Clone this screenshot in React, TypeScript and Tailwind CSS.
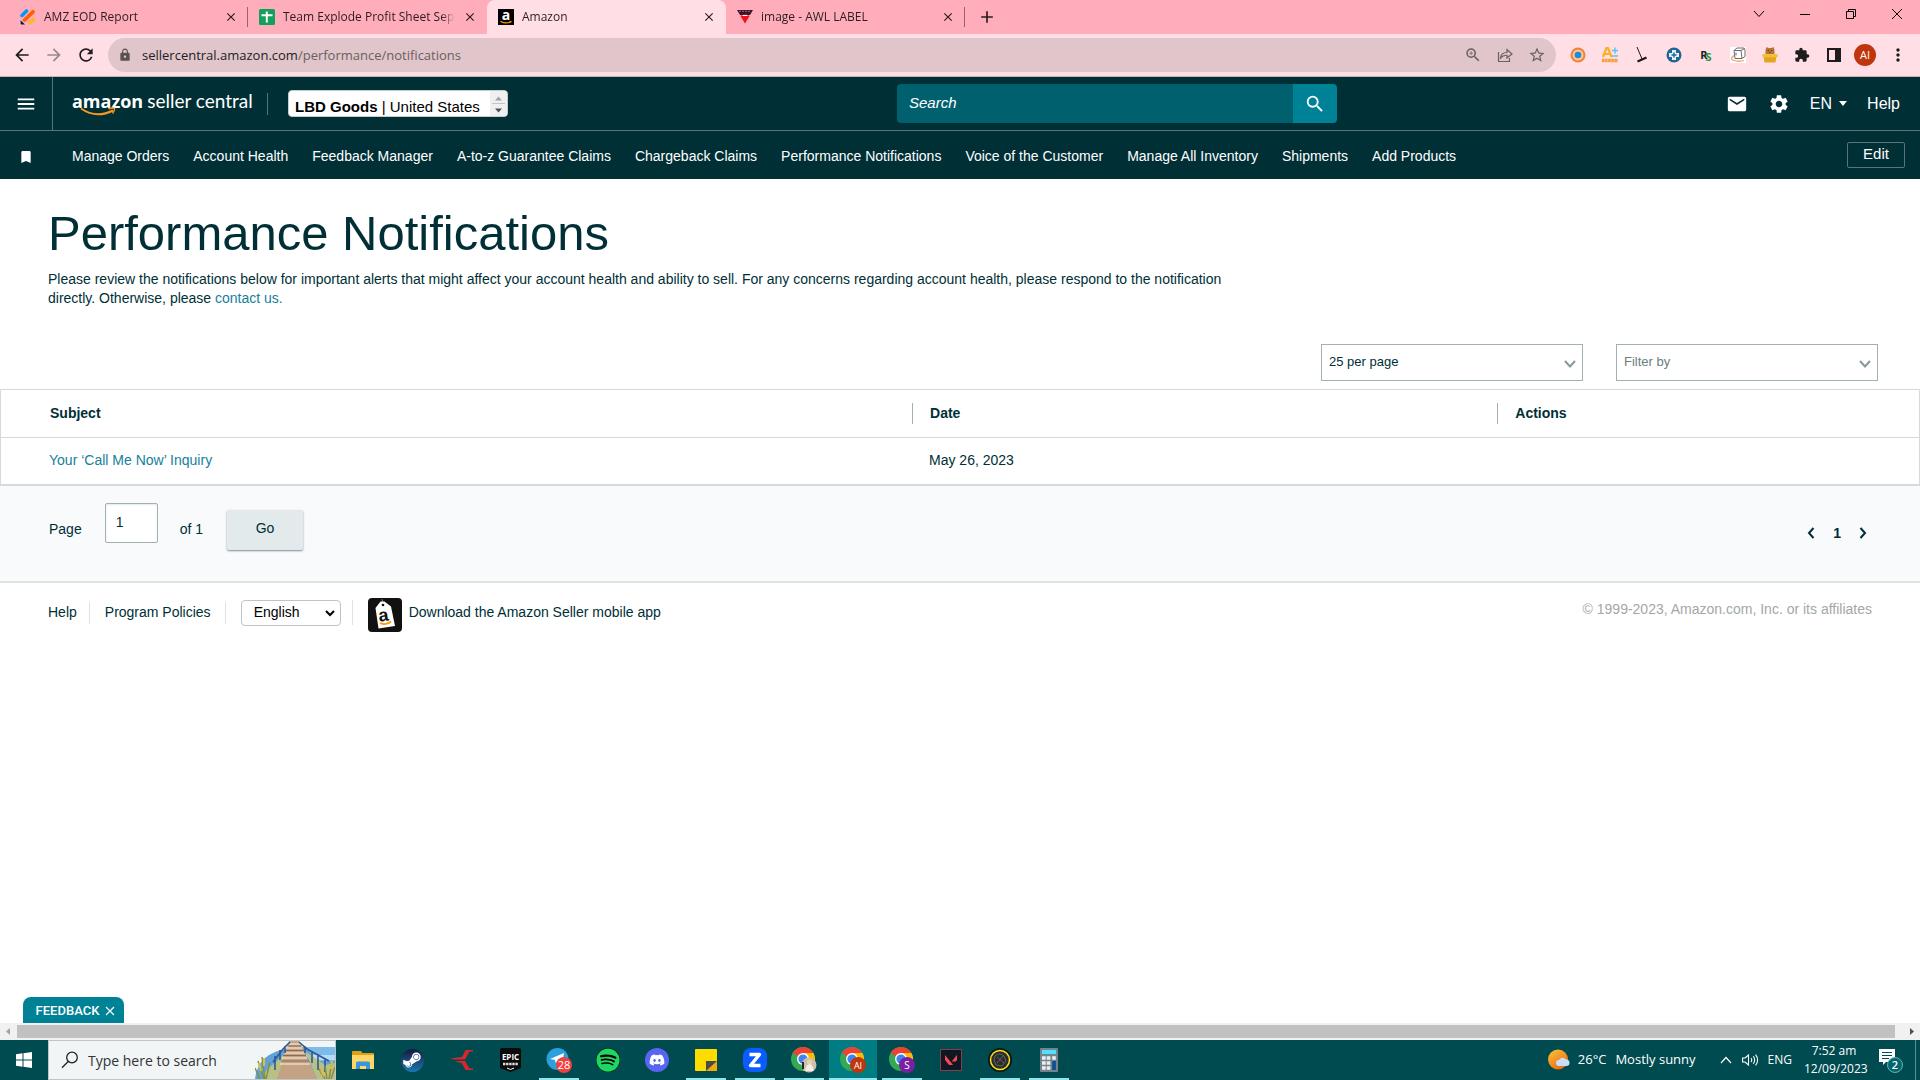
import React from "react";
import { FaDiscord, FaSpotify, FaSteamSymbol } from "react-icons/fa";
import { SiValorant } from "react-icons/si";
import {
  MdArrowBack,
  MdArrowForward,
  MdBookmark,
  MdClose,
  MdEmail,
  MdExtension,
  MdLock,
  MdMoreVert,
  MdRefresh,
  MdSearch,
  MdSettings,
  MdStarBorder,
  MdZoomIn,
  MdAdd,
  MdMenu,
} from "react-icons/md";

/* ---------- browser chrome ---------- */

const FormIcon = () => (
  <svg viewBox="0 0 16 16" className="size-4">
    <path d="M2 6.500 6.500 2" stroke="#0099ff" strokeWidth="3.600" strokeLinecap="round" />
    <path d="M4.500 11 13 2.800" stroke="#ff6100" strokeWidth="3.800" strokeLinecap="round" />
    <path d="M10 13.800 13.600 10.200" stroke="#ffb629" strokeWidth="3.600" strokeLinecap="round" />
    <path d="M.6 11.200v3.400q0 1 1 1H5Z" fill="#0a1551" />
  </svg>
);

const SheetIcon = () => (
  <svg viewBox="0 0 16 16" className="size-4">
    <rect width="16" height="16" rx="1.500" fill="#12a05c" />
    <path d="M7.800 2.500v11M2.500 6.200h11" stroke="#fff" strokeWidth="2" />
  </svg>
);

const AmazonIcon = () => (
  <span className="relative grid size-4 place-items-center bg-black">
    <span className="pb-1 text-[14px] leading-3 font-bold text-white">a</span>
    <svg viewBox="0 0 16 16" className="absolute inset-0 size-4">
      <path d="M2.500 12.200q5.500 3.400 11 .2" fill="none" stroke="#f90" strokeWidth="1.300" />
    </svg>
  </span>
);

const AwlIcon = () => (
  <svg viewBox="0 0 16 16" className="size-4">
    <path d="M0 1h16l-3 5H3Z" fill="#3b1430" />
    <path d="M2 2.300h12" stroke="#c9527c" strokeWidth="1" strokeDasharray="2 1" />
    <path d="m3.400 7 4.600 7.500L12.600 7 10 5.500H6Z" fill="#f01218" />
    <path d="M5.500 6.500h5" stroke="#fff" strokeWidth="1" />
  </svg>
);

const tabs = [
  { title: "AMZ EOD Report", icon: <FormIcon />, active: false, line: true },
  { title: "Team Explode Profit Sheet Septe", icon: <SheetIcon />, active: false, line: false },
  { title: "Amazon", icon: <AmazonIcon />, active: true, line: false },
  { title: "image - AWL LABEL", icon: <AwlIcon />, active: false, line: true },
];

function TabStrip() {
  return (
    <div className="flex h-[34px] bg-[#ffadbb] pl-[9px] text-[#2b1d20]">
      {tabs.map((t) => (
        <div
          key={t.title}
          className={
            t.active
              ? "flex w-[239px] items-center rounded-t-lg bg-[#ffdfe5] pl-[11px]"
              : "flex w-[239px] items-center pl-[11px]"
          }
        >
          {t.icon}
          <span className="ml-2 w-[172px] overflow-hidden text-[12px] whitespace-nowrap [mask-image:linear-gradient(to_right,#000_92%,transparent)]">
            {t.title}
          </span>
          <button aria-label={"Close " + t.title} className="ml-2">
            <MdClose className="size-[14px]" />
          </button>
          {t.line && <span className="ml-auto h-5 w-px bg-[#94646d]" />}
        </div>
      ))}
      <button aria-label="New tab" className="ml-3">
        <MdAdd className="size-5" />
      </button>
      <div className="ml-auto flex h-7 items-center text-black">
        <button aria-label="Search tabs" className="grid w-[46px] place-items-center">
          <svg viewBox="0 0 12 12" className="size-3" fill="none" stroke="currentColor">
            <path d="m1 3 5 5.500 5-5.500" />
          </svg>
        </button>
        <button aria-label="Minimize" className="grid w-[46px] place-items-center">
          <svg viewBox="0 0 12 12" className="size-3" fill="none" stroke="currentColor">
            <path d="M1 6.500h10" />
          </svg>
        </button>
        <button aria-label="Restore" className="grid w-[46px] place-items-center">
          <svg viewBox="0 0 12 12" className="size-3" fill="none" stroke="currentColor">
            <path d="M1.500 3.500h7v7h-7zM3.500 3.500v-2h7v7h-2" />
          </svg>
        </button>
        <button aria-label="Close window" className="grid w-[46px] place-items-center">
          <svg viewBox="0 0 12 12" className="size-3" fill="none" stroke="currentColor">
            <path d="m1 1 10 10M11 1 1 11" />
          </svg>
        </button>
      </div>
    </div>
  );
}

const extensions: { name: string; icon: React.ReactNode }[] = [
  {
    name: "Keepa",
    icon: (
      <svg viewBox="0 0 16 16" className="size-4">
        <circle cx="8" cy="8" r="7.500" fill="#f0813a" />
        <circle cx="8" cy="8" r="5.500" fill="#ffc58a" />
        <circle cx="8" cy="8" r="3.300" fill="#1490e0" />
      </svg>
    ),
  },
  {
    name: "A+ Scout",
    icon: (
      <svg viewBox="0 0 16 16" className="size-4">
        <path d="M1 10 4.500.8h1.400L9.500 10M2.500 7h5" fill="none" stroke="#fbb01c" strokeWidth="2.200" />
        <path d="M10 3.500h6M13 .5v6M10 9h6" stroke="#5cc4ee" strokeWidth="1.400" />
        <path d="M0 13.500h16" stroke="#f79a32" strokeWidth="3.500" strokeDasharray="2.500 .6" />
      </svg>
    ),
  },
  {
    name: "Broom",
    icon: (
      <svg viewBox="0 0 16 16" className="size-4" fill="none" stroke="#1c1618">
        <path d="M3 0 8 12" strokeWidth="1" />
        <path d="m3.500 14.500 9-4" strokeWidth="2.200" />
      </svg>
    ),
  },
  {
    name: "Helper",
    icon: (
      <svg viewBox="0 0 16 16" className="size-4">
        <circle cx="8" cy="8" r="7.500" fill="#1f6596" />
        <path d="M8 3v10M3 8h10" stroke="#e4f1f7" strokeWidth="4" />
        <path d="M8 5.500v5M5.500 8h5" stroke="#1f6596" strokeWidth="1.400" />
      </svg>
    ),
  },
  {
    name: "RevSeller",
    icon: (
      <span className="flex text-[11px] leading-4 font-bold text-[#14201a]">
        R<span className="-ml-0.5 pt-0.5 text-[#169c4c]">S</span>
      </span>
    ),
  },
  {
    name: "Box",
    icon: (
      <svg viewBox="0 0 16 16" className="size-4">
        <rect width="16" height="16" fill="#fff" />
        <path d="M4 3.500 7 1h7l1 2v6.500l-3 2H5Zm0 0h7l3.500-2M11 3.500 12 11M6 5.500v3" fill="none" stroke="#6d6d70" />
        <path d="M4 8.500Q-1 12 4 13.500q5 1.500 10 0" fill="none" stroke="#f0a063" strokeWidth="1.300" />
      </svg>
    ),
  },
  {
    name: "Hamster",
    icon: (
      <svg viewBox="0 0 16 16" className="size-4">
        <path d="M3.500 8V3L4.500 0l2 1h3l2-1 1 3v5Z" fill="#b87436" />
        <path d="M5.800 3.500h.9M9.300 3.500h.9M7.500 5.500h1" stroke="#35200f" strokeWidth="1.200" />
        <path d="M1.500 9h13L13.500 15.500h-11Z" fill="#e3a41e" />
        <rect y="7" width="16" height="3.200" rx="1.600" fill="#f3bf3a" />
      </svg>
    ),
  },
];

function Toolbar() {
  return (
    <div className="flex h-[43px] items-center border-b border-[#c9b0b4] bg-[#ffdfe5] text-[#201c1d]">
      <button aria-label="Back" className="ml-3">
        <MdArrowBack className="size-5" />
      </button>
      <button aria-label="Forward" className="ml-3 text-[#9b888b]">
        <MdArrowForward className="size-5" />
      </button>
      <button aria-label="Reload" className="ml-3">
        <MdRefresh className="size-5" />
      </button>
      <div className="ml-3 flex h-[34px] flex-1 items-center rounded-full bg-[#e0c5ca] px-[10px] text-[#6a5f61]">
        <MdLock className="size-[14px] text-[#5b5052]" />
        <div className="ml-[10px] flex-1 text-[13px] leading-5">
          <span className="text-[#221c1e]">sellercentral.amazon.com</span>/performance/notifications
        </div>
        <button aria-label="Zoom" className="mr-[15px]">
          <MdZoomIn className="size-[18px]" />
        </button>
        <button aria-label="Share" className="mr-[15px]">
          <svg viewBox="0 0 16 16" className="size-4" fill="none" stroke="currentColor" strokeWidth="1.200">
            <path d="M1.500 5v9.500h11V11M3.500 11Q4 5.500 10 5.500V2.500L15 7l-5 4V8.300Q6 8 3.500 11Z" />
          </svg>
        </button>
        <button aria-label="Bookmark">
          <MdStarBorder className="size-[18px]" />
        </button>
      </div>
      <div className="ml-[14px] flex items-center gap-4">
        {extensions.map((e) => (
          <button key={e.name} aria-label={e.name} className="grid size-4 place-items-center">
            {e.icon}
          </button>
        ))}
        <button aria-label="Extensions">
          <MdExtension className="size-4" />
        </button>
        <button aria-label="Side panel">
          <svg viewBox="0 0 16 16" className="size-4">
            <path d="M1 1h14v14H1Zm2 2v10h6V3Z" fill="currentColor" fillRule="evenodd" />
          </svg>
        </button>
      </div>
      <button
        aria-label="Profile"
        className="ml-3 grid size-[22px] place-items-center rounded-full bg-[#bf360c] text-[11px] text-white"
      >
        AI
      </button>
      <button aria-label="Menu" className="mr-3 ml-3">
        <MdMoreVert className="size-5" />
      </button>
    </div>
  );
}

/* ---------- seller central ---------- */

const navItems = [
  "Manage Orders",
  "Account Health",
  "Feedback Manager",
  "A-to-z Guarantee Claims",
  "Chargeback Claims",
  "Performance Notifications",
  "Voice of the Customer",
  "Manage All Inventory",
  "Shipments",
  "Add Products",
];

function SiteHeader() {
  return (
    <header className="bg-[#002f36] text-white">
      <div className="flex h-[54px] items-center border-b border-[#59747a]">
        <button aria-label="Menu" className="grid h-full w-[53px] place-items-center border-r border-[#59747a]">
          <MdMenu className="size-[22px]" />
        </button>
        <a
          href="#home"
          className="relative ml-[19px] flex w-[176px] items-baseline gap-1 pb-[6px] font-['Open_Sans',sans-serif] text-[18px] leading-6 whitespace-nowrap"
        >
          <span className="font-bold">amazon</span>
          <span className="font-['Lato',sans-serif] text-[19px]">seller central</span>
          <svg viewBox="0 0 36 10" className="absolute top-[18px] left-2 h-[10px] w-9" fill="none" stroke="#f7981d">
            <path d="M1 1.500Q16 12 33 3.500" strokeWidth="2" />
            <path d="M28.500 1.800Q33 .6 34.500 1.300 35 3.500 32.500 6.500" strokeWidth="1.400" />
          </svg>
        </a>
        <span className="ml-[19px] h-[22px] w-px bg-[#59747a]" />
        <button className="ml-5 flex h-[27px] w-[220px] items-stretch overflow-hidden rounded border border-[#c4cccd] bg-white text-left text-[15px] text-black">
          <span className="flex-1 pt-1 pl-[6px] leading-6 whitespace-nowrap">
            <b>LBD Goods</b> | United States
          </span>
          <span className="flex w-[17px] flex-col bg-[#f0f0f0]">
            <svg viewBox="0 0 17 25" className="h-full w-full">
              <path d="M5 9.500 8.500 5.500 12 9.500Z" fill="#a3a3a3" />
              <path d="M2 12.500h13" stroke="#c4c4c4" />
              <path d="M5 17.500 8.500 21.500 12 17.500Z" fill="#505050" />
            </svg>
          </span>
        </button>
        <form className="ml-[389px] flex h-[39px] w-[440px]" onSubmit={(e) => e.preventDefault()}>
          <input
            aria-label="Search"
            placeholder="Search"
            className="min-w-0 flex-1 rounded-l-sm bg-[#00606e] px-3 text-[15px] italic placeholder:text-white"
          />
          <button aria-label="Search" className="grid w-11 place-items-center rounded-r-sm bg-[#008296]">
            <MdSearch className="size-[22px]" />
          </button>
        </form>
        <div className="ml-auto flex items-center pr-5 text-[16px]">
          <button aria-label="Messages">
            <MdEmail className="size-[22px]" />
          </button>
          <button aria-label="Settings" className="ml-5">
            <MdSettings className="size-[22px]" />
          </button>
          <button className="ml-5 flex items-center gap-[7px]">
            EN
            <svg viewBox="0 0 8 5" className="h-[5px] w-2">
              <path d="M0 0h8L4 5Z" fill="currentColor" />
            </svg>
          </button>
          <a href="#help" className="ml-5">
            Help
          </a>
        </div>
      </div>
      <nav className="flex h-12 items-center pt-[3px] text-[14px]">
        <MdBookmark className="ml-[18px] size-4" />
        <div className="ml-[38px] flex gap-6 whitespace-nowrap">
          {navItems.map((n) => (
            <a key={n} href="#nav">
              {n}
            </a>
          ))}
        </div>
        <button className="mr-[15px] mb-1 ml-auto h-[26px] w-[58px] rounded-xs border border-[#59747a] pb-0.5 text-[15px] leading-5">
          Edit
        </button>
      </nav>
    </header>
  );
}

function Dropdown({ label, option, muted }: { label: string; option: string; muted?: boolean }) {
  return (
    <div className="relative">
      <select
        aria-label={label}
        className={
          muted
            ? "block h-[37px] w-[262px] appearance-none border border-[#a1b1b3] bg-white pb-0.5 pl-[7px] text-[13px] text-[#6c7c7f]"
            : "block h-[37px] w-[262px] appearance-none border border-[#a1b1b3] bg-white pb-0.5 pl-[7px] text-[13px] text-[#002f36]"
        }
      >
        <option>{option}</option>
      </select>
      <svg
        viewBox="0 0 12 8"
        className="pointer-events-none absolute top-4 right-[7px] h-2 w-3"
        fill="none"
        stroke="#87999c"
        strokeWidth="2"
      >
        <path d="m1 1 5 5.500L11 1" />
      </svg>
    </div>
  );
}

function Notifications() {
  return (
    <>
      <section className="px-12 pt-[25px]">
        <h1 className="text-[49px] leading-[58px] whitespace-nowrap">Performance Notifications</h1>
        <p className="max-w-[1240px] pt-2 text-[14px] leading-[19px]">
          Please review the notifications below for important alerts that might affect your account health and ability
          to sell. For any concerns regarding account health, please respond to the notification
          <br />
          directly. Otherwise, please{" "}
          <a href="#contact" className="text-[#17809a]">
            contact us.
          </a>
        </p>
      </section>
      <div className="mt-9 flex justify-end gap-[33px] pr-[42px] pb-2">
        <Dropdown label="Results per page" option="25 per page" />
        <Dropdown label="Filter" option="Filter by" muted />
      </div>
      <table className="w-full table-fixed border border-b-2 border-[#d5dbdb] text-left text-[14px]">
        <thead>
          <tr className="h-12 border-b border-[#d5dbdb]">
            <th className="w-[47.5%] pl-[49px]">Subject</th>
            <th className="w-[30.5%]">
              <div className="border-l border-[#a1b1b3] pl-[17px]">Date</div>
            </th>
            <th>
              <div className="border-l border-[#a1b1b3] pl-[17px]">Actions</div>
            </th>
          </tr>
        </thead>
        <tbody>
          <tr className="h-[47px]">
            <td className="pl-12">
              <a href="#inquiry" className="text-[#17809a]">
                Your ‘Call Me Now’ Inquiry
              </a>
            </td>
            <td className="pl-[17px]">May 26, 2023</td>
            <td />
          </tr>
        </tbody>
      </table>
      <div className="flex h-[97px] items-start border-b-2 border-[#e0e3e4] bg-[#f9fafc] pr-[53px] pl-[49px] text-[14px]">
        <label htmlFor="page" className="pt-[33px]">
          Page
        </label>
        <input
          id="page"
          defaultValue="1"
          className="mt-[17px] ml-[23px] h-10 w-[53px] rounded-xs border border-[#a1b1b3] bg-white pb-0.5 pl-[10px] shadow-[inset_0_1px_2px_#e3e8e8]"
        />
        <span className="ml-[22px] pt-[33px]">of 1</span>
        <button className="mt-6 ml-6 h-10 w-[76px] rounded-xs bg-[#e3eaeb] pb-0.5 shadow-[0_1px_2px_#889]">Go</button>
        <div className="ml-auto flex items-center gap-[18px] pt-[37px]">
          <button aria-label="Previous page">
            <svg viewBox="0 0 8 12" className="h-3 w-2" fill="none" stroke="currentColor" strokeWidth="2">
              <path d="M6.500 1 2 6l4.500 5" />
            </svg>
          </button>
          <b>1</b>
          <button aria-label="Next page">
            <svg viewBox="0 0 8 12" className="h-3 w-2" fill="none" stroke="currentColor" strokeWidth="2">
              <path d="m1.500 1 4.500 5-4.500 5" />
            </svg>
          </button>
        </div>
      </div>
    </>
  );
}

function SiteFooter() {
  return (
    <footer className="flex h-[60px] items-center px-12 text-[14px]">
      <a href="#help">Help</a>
      <span className="ml-3 h-[22px] w-px bg-[#dfe3e4]" />
      <a href="#policies" className="ml-[15px]">
        Program Policies
      </a>
      <span className="ml-[14px] h-[22px] w-px bg-[#dfe3e4]" />
      <div className="relative ml-[15px]">
        <select
          aria-label="Language"
          className="block h-[26px] w-[100px] appearance-none rounded border border-[#c0c4c5] bg-white pl-3 text-[14px] text-black"
        >
          <option>English</option>
        </select>
        <svg
          viewBox="0 0 10 7"
          className="pointer-events-none absolute top-[10px] right-[6px] h-[7px] w-[10px]"
          fill="none"
          stroke="#000"
          strokeWidth="2"
        >
          <path d="m1 1 4 4 4-4" />
        </svg>
      </div>
      <span className="ml-[11px] h-[25px] w-px bg-[#dfe3e4]" />
      <a href="#app" className="ml-[15px] flex items-center gap-[7px]">
        <svg viewBox="0 0 34 34" className="mt-1 size-[34px]">
          <rect width="34" height="34" rx="4" fill="#111" />
          <path d="M14 1q1 3 1 6" stroke="#777" fill="none" />
          <path d="m7.500 10 5-6.500h4L23 8.500 27 28 10.500 30.500Z" fill="#fff" />
          <circle cx="15" cy="7" r="1.300" fill="#111" />
          <text x="10.500" y="23" fontSize="18" fontWeight="700" fill="#111" transform="rotate(-8 17 18)">
            a
          </text>
          <path d="M12 25q6 3 11-1.500" fill="none" stroke="#f90" strokeWidth="1.800" />
        </svg>
        Download the Amazon Seller mobile app
      </a>
      <span className="ml-auto pb-[7px] text-[#a3a7a9]">© 1999-2023, Amazon.com, Inc. or its affiliates</span>
    </footer>
  );
}

/* ---------- taskbar ---------- */

const ChromeIcon = ({ children }: { children: React.ReactNode }) => (
  <svg viewBox="0 0 26 26" className="size-[26px]">
    <circle cx="12" cy="12" r="12" fill="#34a853" />
    <path d="M12 12 1.600 6A12 12 0 0 1 22.400 6Z" fill="#ea4335" />
    <path d="M12 6h10.400A12 12 0 0 1 12 24l5-9Z" fill="#fbbc04" />
    <circle cx="12" cy="12" r="6" fill="#fff" />
    <circle cx="12" cy="12" r="4.600" fill="#3f83f0" />
    {children}
  </svg>
);

const apps: { name: string; icon: React.ReactNode; state?: "open" | "active" }[] = [
  {
    name: "File Explorer",
    icon: (
      <svg viewBox="0 0 22 18" className="h-[18px] w-[22px]">
        <path d="M0 1q0-1 1-1h8l1.500 2H21q1 0 1 1v3H0Z" fill="#e0a010" />
        <path d="M0 4h22v14H0Z" fill="#ffd767" />
        <path d="M4 18v-6q0-1.500 1.500-1.500h11Q18 10.500 18 12v6h-4v-3H8v3Z" fill="#3b94e0" />
      </svg>
    ),
  },
  {
    name: "Steam",
    icon: (
      <span className="grid size-[23px] place-items-center overflow-hidden rounded-full bg-linear-to-b from-[#131a3d] to-[#1579b3] text-white">
        <FaSteamSymbol className="size-[20px]" />
      </span>
    ),
  },
  {
    name: "Red Launcher",
    icon: (
      <svg viewBox="0 0 23 20" className="h-5 w-[23px]" fill="#dc242b">
        <path d="M0 8.500 12 7 15.500 0H23v1.500h-3.500L15 9.500H4ZM5 11h10l4.500 7.500H23V20h-7.500L12 13.500Z" />
      </svg>
    ),
  },
  {
    name: "Epic Games",
    icon: (
      <svg viewBox="0 0 21 24" className="h-6 w-[21px]">
        <path d="M2 0h17q2 0 2 2v18l-10.500 4L0 20V2Q0 0 2 0Z" fill="#0b0b0c" />
        <text x="10.500" y="12" textAnchor="middle" fontSize="8" fontWeight="700" fill="#fff">
          EPIC
        </text>
        <path d="M3 16h15" stroke="#ddd" strokeWidth="2.400" strokeDasharray="2.400 .7" />
        <path d="m7 20 3.500 1.500L14 20" stroke="#fff" fill="none" />
      </svg>
    ),
  },
  {
    name: "Telegram",
    state: "open",
    icon: (
      <svg viewBox="0 0 26 26" className="size-[26px]">
        <circle cx="11.500" cy="12" r="11" fill="#2ba0dc" />
        <path d="m4 12 14-6-2 11-4-3-2.500 2L9 13Z" fill="#fff" />
        <circle cx="18" cy="18" r="8" fill="#f03f3f" />
        <text x="18" y="22" textAnchor="middle" fontSize="11" fill="#fff">
          28
        </text>
      </svg>
    ),
  },
  {
    name: "Spotify",
    icon: (
      <span className="grid size-6 place-items-center rounded-full bg-black text-[#1ed760]">
        <FaSpotify className="size-6" />
      </span>
    ),
  },
  {
    name: "Discord",
    icon: (
      <span className="grid size-6 place-items-center rounded-full bg-[#5865f2] text-white">
        <FaDiscord className="size-4" />
      </span>
    ),
  },
  {
    name: "Sticky Notes",
    state: "open",
    icon: (
      <svg viewBox="0 0 22 22" className="size-[22px]">
        <rect width="22" height="22" rx="1" fill="#ffdc00" />
        <path d="M11 12h11v10H11Z" fill="#4a4a4c" />
        <path d="M22 12v10H11Z" fill="#eeab0e" />
      </svg>
    ),
  },
  {
    name: "Zoom",
    state: "open",
    icon: (
      <svg viewBox="0 0 24 24" className="size-6">
        <rect width="24" height="24" rx="8" fill="#0b5cff" />
        <path d="M6.500 6.500h10L7.500 17.500h10" fill="none" stroke="#fff" strokeWidth="3.400" strokeLinejoin="round" />
      </svg>
    ),
  },
  {
    name: "Chrome",
    state: "open",
    icon: (
      <ChromeIcon>
        <circle cx="18" cy="18" r="7.500" fill="#cdbfae" />
        <circle cx="18.500" cy="15" r="2.500" fill="#efd0ac" />
        <path d="M14 24q1-7 4.500-7t4 7Z" fill="#f3ece4" />
        <path d="M12 15v7" stroke="#27272a" strokeWidth="2" />
      </ChromeIcon>
    ),
  },
  {
    name: "Chrome AI",
    state: "active",
    icon: (
      <ChromeIcon>
        <circle cx="18" cy="18" r="8" fill="#bf360c" />
        <text x="18" y="21.500" textAnchor="middle" fontSize="9" fill="#fff">
          AI
        </text>
      </ChromeIcon>
    ),
  },
  {
    name: "Chrome S",
    state: "open",
    icon: (
      <ChromeIcon>
        <circle cx="18" cy="18" r="8" fill="#7b1fa2" />
        <text x="18" y="21.500" textAnchor="middle" fontSize="10" fill="#fff">
          S
        </text>
      </ChromeIcon>
    ),
  },
  {
    name: "Valorant",
    icon: (
      <span className="grid size-[22px] place-items-center border border-[#80414d] bg-[#0f1822] text-[#ff4655]">
        <SiValorant className="size-3" />
      </span>
    ),
  },
  {
    name: "Game Client",
    state: "open",
    icon: (
      <svg viewBox="0 0 24 24" className="size-6">
        <circle cx="12" cy="12" r="12" fill="#141416" />
        <circle cx="12" cy="12" r="9.500" fill="#2b2b2c" stroke="#f2e317" strokeWidth="1.500" />
        <path
          d="M7 8q5-4 9 0l2 5-4 5-6-1-2-5ZM9 9l7 6M15 8l-6 7"
          fill="none"
          stroke="#6f6f6c"
          strokeWidth=".8"
        />
      </svg>
    ),
  },
  {
    name: "Calculator",
    state: "open",
    icon: (
      <svg viewBox="0 0 18 24" className="h-6 w-[18px]">
        <rect width="18" height="24" rx="1" fill="#75838d" />
        <rect x="2" y="2" width="14" height="4" fill="#50e0ff" />
        <path d="M2 10h8.500M2 15h8.500M2 20h8.500" stroke="#eceff1" strokeWidth="3.600" strokeDasharray="3.700 1" />
        <path d="M14 8.200v3.600" stroke="#eceff1" strokeWidth="3.600" />
        <rect x="12.200" y="13" width="3.700" height="9" fill="#0d4f94" />
      </svg>
    ),
  },
];

const Boardwalk = () => (
  <svg viewBox="0 0 80 38" className="h-full w-20">
    <path d="M0 38Q3 12 32 8l10-2 10 0h28v32Z" fill="#5fa3dc" />
    <path d="M50 0h30v5H52Z" fill="#f1f5f6" />
    <path d="M52 6h28v14H60Z" fill="#7dbcea" />
    <path d="M50 14h30v5H55Z" fill="#b4dcf5" />
    <path d="M8 38q1-9 12-16l12-12 4 4-14 24ZM50 10l20 14 10-2v16H62Z" fill="#b8c083" />
    <path d="M34 0h10l18 38H22Z" fill="#c3a384" />
    <path d="M33.500 3h12M31.500 7h16M29.500 12h20M27 17h25M25 23h30" stroke="#ecd8c0" strokeWidth="1.600" />
    <path d="M33.500 5h13M31 9.500h18M28 14.500h23M26 20h28" stroke="#8c6a53" strokeWidth="1" />
    <path
      d="m35 1-7 7-10 13M44 1l8 7 22 12M30 5v7M25 9v10M20 15v14M50 5v7M57 10v12M63 13v16M70 17v14"
      fill="none"
      stroke="#33578f"
      strokeWidth="1.600"
    />
    <path
      d="m9 38-6-18M10 38 7 16M11 38l4-17M5 38 0 27M70 38l-6-10M72 38l-2-13M74 38l3-17M76 38l4-12"
      stroke="#87903a"
      strokeWidth="1.500"
    />
    <path d="m4 22 2 8M9 17v8M66 29l3 6M77 20l-1 8" stroke="#dcbf45" strokeWidth="2" />
  </svg>
);

function Taskbar() {
  return (
    <footer className="flex h-10 bg-[#004b50] font-['Open_Sans',sans-serif] text-white">
      <button aria-label="Start" className="grid w-12 place-items-center">
        <svg viewBox="0 0 16 16" className="size-4" fill="#fff">
          <path d="M0 2.200 6.500 1.300V7.500H0ZM7.500 1.200 16 0v7.500H7.500ZM0 8.500h6.500v6.200L0 13.800ZM7.500 8.500H16V16l-8.500-1.200Z" />
        </svg>
      </button>
      <div className="flex w-[288px] items-center border border-[#bfc4c5] bg-[#f1f5f6] pl-3 text-[#2b2b2b]">
        <svg viewBox="0 0 18 18" className="size-[18px]" fill="none" stroke="#222" strokeWidth="1.300">
          <circle cx="11" cy="6.500" r="5.300" />
          <path d="M7.200 10.500 1 16.800" />
        </svg>
        <input
          aria-label="Type here to search"
          placeholder="Type here to search"
          className="ml-[9px] min-w-0 flex-1 bg-transparent text-[14px] placeholder:text-[#333]"
        />
        <Boardwalk />
      </div>
      <div className="ml-[3px] flex gap-px">
        {apps.map((a) => (
          <button
            key={a.name}
            aria-label={a.name}
            className={
              a.state === "active"
                ? "flex w-12 flex-col items-center bg-[#007c83]"
                : "flex w-12 flex-col items-center"
            }
          >
            <span className="grid flex-1 place-items-center pt-0.5">{a.icon}</span>
            {a.state === "active" && <span className="h-0.5 w-full bg-[#8ee6ec]" />}
            {a.state === "open" && <span className="h-0.5 w-10 bg-[#8ee6ec]" />}
            {!a.state && <span className="h-0.5" />}
          </button>
        ))}
      </div>
      <div className="ml-auto flex items-center whitespace-nowrap">
        <button className="flex items-center text-[13px]">
          <svg viewBox="0 0 22 22" className="size-[22px]">
            <defs>
              <linearGradient id="sun" x1="0" y1="0" x2=".6" y2="1">
                <stop offset="0" stopColor="#f8c73c" />
                <stop offset="1" stopColor="#f06b10" />
              </linearGradient>
            </defs>
            <circle cx="10" cy="10.500" r="10" fill="url(#sun)" />
            <path d="M11 17a3 3 0 0 1 0-6 4 4 0 0 1 7-.5A3.300 3.300 0 0 1 19 17Z" fill="#c9dcf8" />
          </svg>
          <span className="ml-2">26°C</span>
          <span className="ml-[9px]">Mostly sunny</span>
        </button>
        <button aria-label="Show hidden icons" className="ml-6">
          <svg viewBox="0 0 12 8" className="h-2 w-3" fill="none" stroke="#fff" strokeWidth="1.200">
            <path d="m1 7 5-5.500L11 7" />
          </svg>
        </button>
        <button aria-label="Volume" className="ml-[10px]">
          <svg viewBox="0 0 17 14" className="h-[14px] w-[17px]" fill="none" stroke="#fff" strokeWidth="1.100">
            <path d="M.6 5h2.500L6.500 2v10L3.100 9H.6ZM9 5q1.500 2 0 4M11.300 3.300q2.700 3.700 0 7.400M13.600 1.600q4 5.400 0 10.800" />
          </svg>
        </button>
        <button className="ml-[9px] text-[12px]">ENG</button>
        <button className="ml-3 w-[60px] text-center text-[12px] leading-[18px]">
          7:52 am
          <br />
          12/09/2023
        </button>
        <button aria-label="2 new notifications" className="mr-[11px] ml-[14px]">
          <svg viewBox="0 0 26 26" className="size-[26px]">
            <path d="M1 2h16v13H8l-3 3v-3H1Z" fill="#fff" />
            <path d="M4 5.500h10M4 8.500h10M4 11.500h7" stroke="#004b50" />
            <circle cx="17" cy="18" r="7.500" fill="#05676d" stroke="#5fb3b6" />
            <text x="17" y="22" textAnchor="middle" fontSize="11" fontWeight="600" fill="#fff">
              2
            </text>
          </svg>
        </button>
        <span className="mr-1 h-10 w-px bg-[#5c9194]" />
      </div>
    </footer>
  );
}

export default function App() {
  return (
    <div className="flex min-h-screen flex-col bg-white font-['Liberation_Sans',Arial,sans-serif] text-[#002f36]">
      <div className="font-['Open_Sans',sans-serif]">
        <TabStrip />
        <Toolbar />
      </div>
      <SiteHeader />
      <main>
        <Notifications />
      </main>
      <SiteFooter />
      <button className="mt-auto ml-[23px] flex h-[26px] w-[101px] items-center justify-center gap-[6px] rounded-t-lg bg-[#008296] pt-0.5 pl-1 font-['Roboto',sans-serif] text-[13px] font-medium text-white">
        FEEDBACK
        <svg viewBox="0 0 10 10" className="size-[10px]" fill="none" stroke="#fff" strokeWidth="1.200">
          <path d="m1 1 8 8M9 1 1 9" />
        </svg>
      </button>
      <div className="flex h-[17px] items-center bg-[#f1f1f1]">
        <svg viewBox="0 0 17 17" className="size-[17px]">
          <path d="M10 5v7L6 8.500Z" fill="#a3a3a3" />
        </svg>
        <div className="h-[13px] flex-1 bg-[#c1c1c1]" />
        <svg viewBox="0 0 17 17" className="mx-1 size-[17px]">
          <path d="M11 5v7l4-3.500Z" fill="#505050" />
        </svg>
      </div>
      <Taskbar />
    </div>
  );
}
